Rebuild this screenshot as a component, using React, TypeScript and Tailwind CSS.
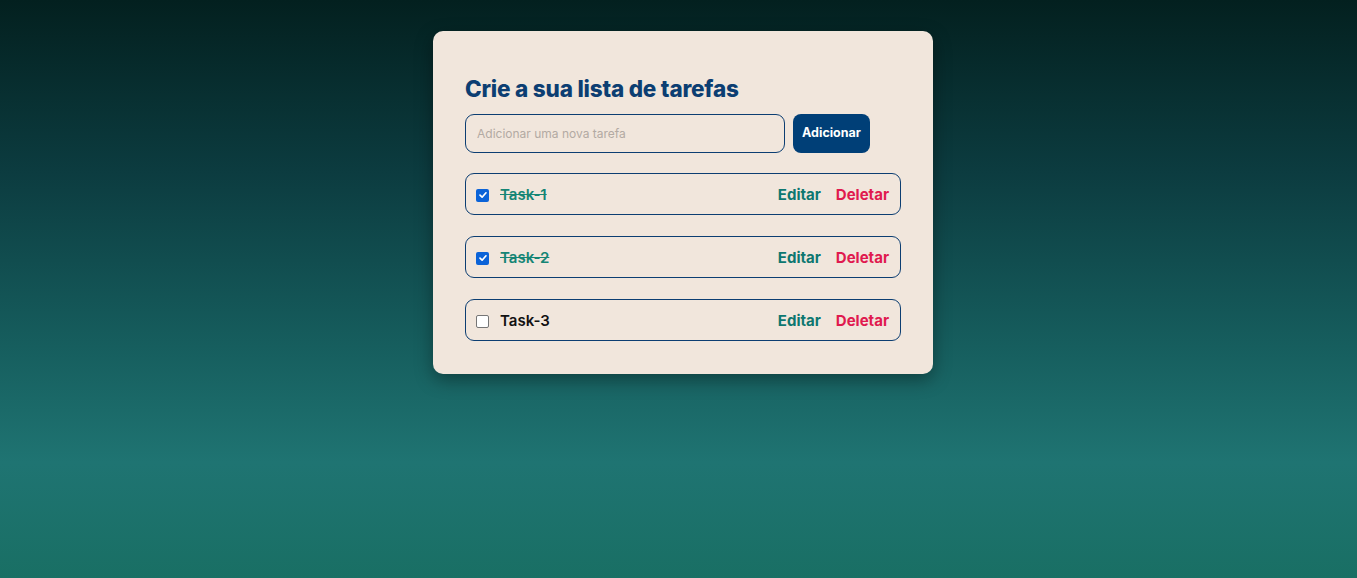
import React from "react";

const tasks = [
  { name: "Task-1", done: true },
  { name: "Task-2", done: true },
  { name: "Task-3", done: false },
];

function Check({ checked }: { checked: boolean }) {
  if (checked) {
    return (
      <span className="flex h-[13px] w-[13px] items-center justify-center rounded-[2px] bg-[#0b63d8]">
        <svg width="10" height="10" viewBox="0 0 10 10">
          <path d="M2 5.2 L4.1 7.2 L8 2.8" fill="none" stroke="white" strokeWidth="1.7" strokeLinecap="round" strokeLinejoin="round" />
        </svg>
      </span>
    );
  }
  return <span className="block h-[13px] w-[13px] rounded-[2px] border-[1.5px] border-[#767676] bg-white" />;
}

export default function App() {
  return (
    <div
      className="flex min-h-[578px] w-full justify-center bg-[linear-gradient(180deg,#03201f_0%,#0c3c40_30%,#165e5e_60%,#1f7472_80%,#196f64_100%)] pl-[9px] pt-[31px]"
      style={{ fontFamily: "Inter, 'Noto Sans', sans-serif" }}
    >
      <div className="h-[343px] w-[500px] rounded-[10px] bg-[#f1e6dc] px-[32px] pt-[44px] shadow-[0_6px_18px_rgba(0,0,0,0.35)]">
        <h1 className="text-[22.5px] font-extrabold leading-[28px] tracking-[-0.2px] text-[#0c3e72]">Crie a sua lista de tarefas</h1>
        <div className="mt-[11px] flex gap-[8px]">
          <div className="flex h-[39px] w-[320px] items-center rounded-[9px] border border-[#0c3e72] px-[11px] text-[12px] text-[#b3aaa3]">
            Adicionar uma nova tarefa
          </div>
          <div className="flex h-[39px] w-[77px] items-center justify-center rounded-[8px] bg-[#003f77] text-[12.5px] font-bold text-white">
            Adicionar
          </div>
        </div>
        <div className="mt-[20px] flex w-[436px] flex-col gap-[21px]">
          {tasks.map((t) => (
            <div key={t.name} className="flex h-[42px] items-center rounded-[9px] border border-[#0c3e72] pl-[10px] pr-[11px] pt-[2px]">
              <Check checked={t.done} />
              <span
                className={
                  t.done
                    ? "ml-[11px] text-[15px] font-semibold text-[#158575] line-through"
                    : "ml-[11px] text-[15px] font-semibold text-[#111]"
                }
              >
                {t.name}
              </span>
              <span className="ml-auto text-[15px] font-bold text-[#0d7770]">Editar</span>
              <span className="ml-[15px] text-[15px] font-bold text-[#e01a4f]">Deletar</span>
            </div>
          ))}
        </div>
      </div>
    </div>
  );
}
